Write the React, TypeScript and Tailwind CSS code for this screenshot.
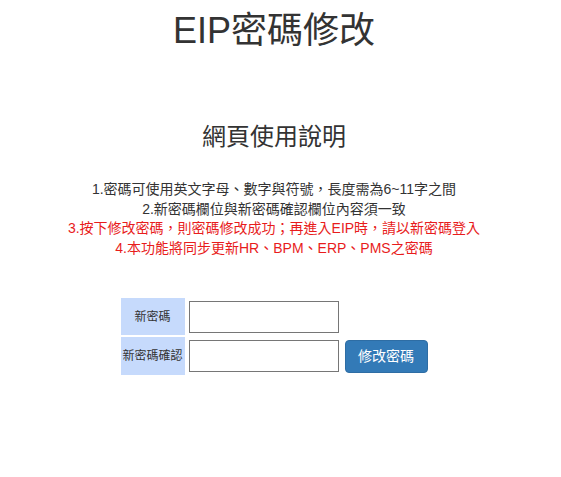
import React from "react";

const font = "font-['Liberation_Sans','Noto_Sans_CJK_TC',sans-serif]";

const rules = [
  { text: "1.密碼可使用英文字母、數字與符號，長度需為6~11字之間", red: false },
  { text: "2.新密碼欄位與新密碼確認欄位內容須一致", red: false },
  { text: "3.按下修改密碼，則密碼修改成功；再進入EIP時，請以新密碼登入", red: true },
  { text: "4.本功能將同步更新HR、BPM、ERP、PMS之密碼", red: true },
];

export default function App() {
  return (
    <div className={`${font} w-[548px] bg-white text-[#333] text-center`}>
      {/* title */}
      <h1 className="pt-[10px] text-[36px] leading-[42px]">EIP密碼修改</h1>

      {/* 說明 */}
      <h2 className="mt-[70px] text-[24px] leading-[30px]">網頁使用說明</h2>

      <div className="mt-[28px] text-[14px] leading-[19.5px]">
        {rules.map((r) => (
          <p key={r.text} className={r.red ? "text-[#e81c1c]" : ""}>
            {r.text}
          </p>
        ))}
      </div>

      {/* form */}
      <div className="mt-[40px] flex justify-center">
        <div className="flex flex-col gap-[2px]">
          <div className="flex items-center gap-[4px] h-[37px]">
            <div className="w-[64px] h-full bg-[#c6dafc] text-[12px] flex items-center justify-center">新密碼</div>
            <input type="password" className="w-[150px] h-[32px] border border-[#767676] bg-white" />
            <div className="w-[83px] ml-[2px]" />
          </div>
          <div className="flex items-center gap-[4px] h-[38px]">
            <div className="w-[64px] h-full bg-[#c6dafc] text-[12px] flex items-center justify-center">新密碼確認</div>
            <input type="password" className="w-[150px] h-[32px] border border-[#767676] bg-white" />
            <button className="ml-[2px] w-[83px] h-[33px] rounded-[4px] bg-[#337ab7] border border-[#2e6da4] text-white text-[14px]">
              修改密碼
            </button>
          </div>
        </div>
      </div>
    </div>
  );
}
